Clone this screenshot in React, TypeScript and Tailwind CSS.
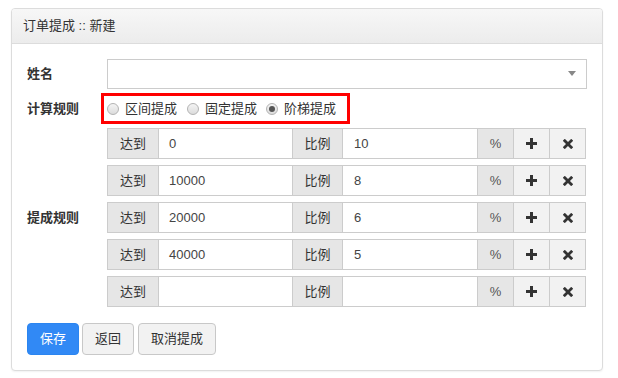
import React from "react";

const font = { fontFamily: '"Liberation Sans", "Noto Sans CJK SC", sans-serif' };

function Radio({ checked }: { checked?: boolean }) {
  return (
    <span className="relative inline-flex h-[12px] w-[12px] items-center justify-center rounded-full border border-[#b3b3b3] bg-gradient-to-b from-[#f4f4f4] to-[#dcdcdc]">
      {checked && <span className="h-[6px] w-[6px] rounded-full bg-[#555]" />}
    </span>
  );
}

function PlusIcon() {
  return (
    <svg width="11" height="11" viewBox="0 0 11 11">
      <rect x="4" y="0" width="3" height="11" fill="#333" />
      <rect x="0" y="4" width="11" height="3" fill="#333" />
    </svg>
  );
}

function XIcon() {
  return (
    <svg width="10" height="10" viewBox="0 0 10 10">
      <path d="M1.8 1.8 L8.2 8.2 M8.2 1.8 L1.8 8.2" stroke="#333" strokeWidth="2.8" strokeLinecap="square" />
    </svg>
  );
}

function TierRow({ to, ratio }: { to: string; ratio: string }) {
  return (
    <div className="flex h-[31px] w-[479px] border border-[#ccc] text-[13px] text-[#333]">
      <div className="flex w-[51px] items-center justify-center border-r border-[#ccc] bg-[#e6e6e6]">达到</div>
      <div className="flex w-[133px] items-center bg-white pl-[10px] text-[#444]">{to}</div>
      <div className="flex w-[51px] items-center justify-center border-x border-[#ccc] bg-[#e6e6e6]">比例</div>
      <div className="flex w-[134px] items-center bg-white pl-[11px] text-[#444]">{ratio}</div>
      <div className="flex w-[36px] items-center justify-center border-l border-[#ccc] bg-[#e6e6e6] text-[#555]">%</div>
      <div className="flex w-[36px] items-center justify-center border-l border-[#ccc] bg-[#f2f2f2]">
        <PlusIcon />
      </div>
      <div className="flex w-[36px] items-center justify-center border-l border-[#ccc] bg-[#f2f2f2]">
        <XIcon />
      </div>
    </div>
  );
}

export default function App() {
  const rows = [
    ["0", "10"],
    ["10000", "8"],
    ["20000", "6"],
    ["40000", "5"],
    ["", ""],
  ];
  return (
    <div className="h-[378px] w-[618px] bg-white pl-[11px] pt-[8px]" style={font}>
      <div className="w-[592px] overflow-hidden rounded-[4px] border border-[#dcdcdc] bg-white shadow-[0_1px_2px_rgba(0,0,0,0.06)]">
        <div className="flex h-[35px] items-center border-b border-[#dcdcdc] bg-gradient-to-b from-[#f7f7f7] to-[#ececec] pl-[11px] text-[13px] text-[#333]">
          订单提成 :: 新建
        </div>
        <div className="px-[15px] pb-[15px] pt-[15px] text-[13px] text-[#333]">
          <div className="flex items-center">
            <div className="w-[80px] font-bold">姓名</div>
            <div className="relative h-[30px] w-[480px] border border-[#ccc] bg-white">
              <svg className="absolute right-[10px] top-[11px]" width="8" height="5" viewBox="0 0 8 5">
                <path d="M0 0 L8 0 L4 5 Z" fill="#888" />
              </svg>
            </div>
          </div>
          <div className="mt-[4px] flex items-center">
            <div className="w-[80px] font-bold">计算规则</div>
            <div className="ml-[-6px] flex h-[31px] w-[249px] items-center border-[3px] border-[#ff0000] pl-[3px] text-[#333]">
              <Radio />
              <span className="ml-[6px]">区间提成</span>
              <span className="ml-[10px] flex items-center">
                <Radio />
              </span>
              <span className="ml-[6px]">固定提成</span>
              <span className="ml-[9px] flex items-center">
                <Radio checked />
              </span>
              <span className="ml-[6px]">阶梯提成</span>
            </div>
          </div>
          <div className="mt-[4px] flex items-center">
            <div className="w-[80px] font-bold">提成规则</div>
            <div className="flex flex-col gap-[6px]">
              {rows.map((r, i) => (
                <TierRow key={i} to={r[0]} ratio={r[1]} />
              ))}
            </div>
          </div>
          <div className="mt-[16px] flex gap-[3px]">
            <button className="h-[32px] w-[52px] rounded-[4px] border border-[#2b85f0] bg-[#3189f5] text-[13px] text-white">
              保存
            </button>
            <button className="h-[32px] w-[52px] rounded-[4px] border border-[#c8c8c8] bg-[#f2f2f2] text-[13px] text-[#333]">
              返回
            </button>
            <button className="ml-[1px] h-[32px] w-[78px] rounded-[4px] border border-[#c8c8c8] bg-[#f2f2f2] text-[13px] text-[#333]">
              取消提成
            </button>
          </div>
        </div>
      </div>
    </div>
  );
}
